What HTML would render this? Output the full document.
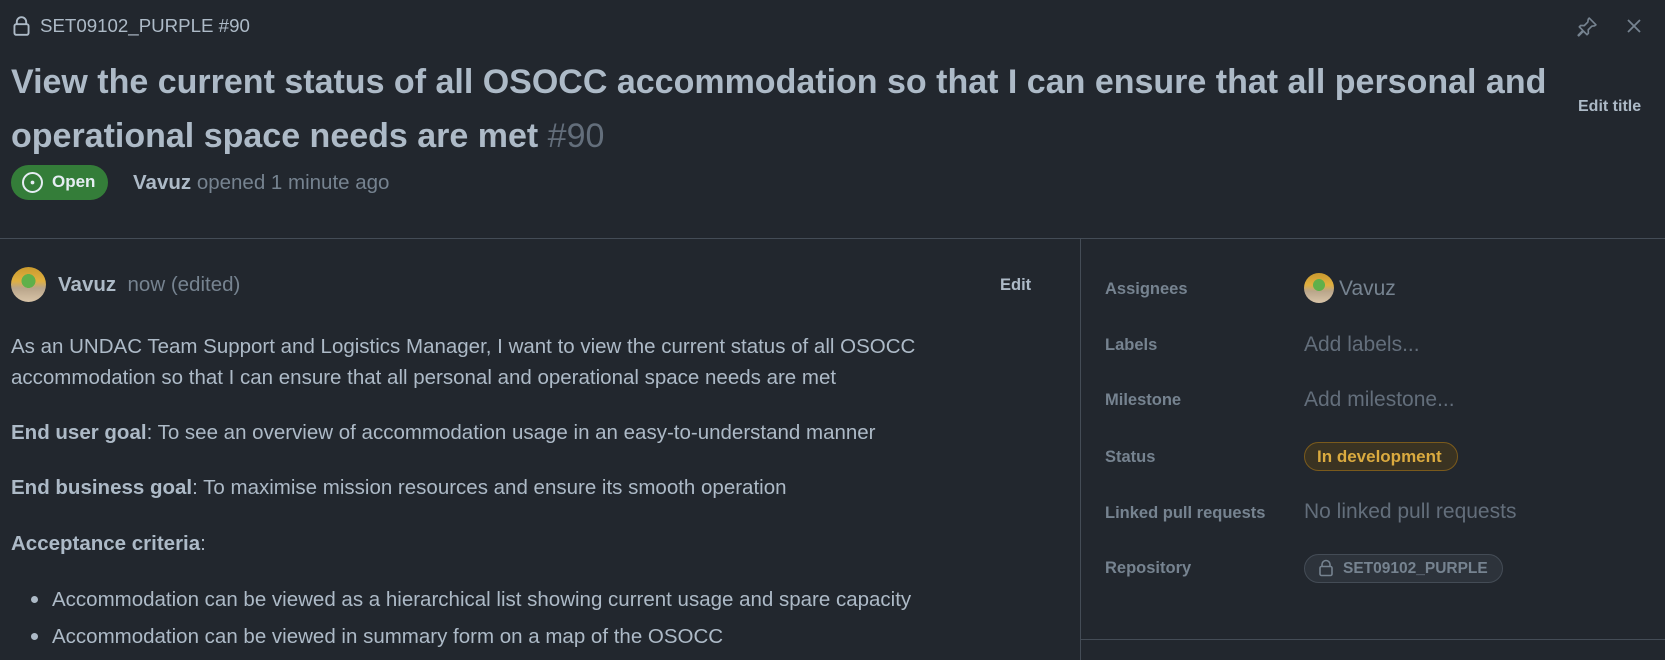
<!DOCTYPE html>
<html><head><meta charset="utf-8"><style>
*{margin:0;padding:0;box-sizing:border-box}
body{width:1665px;height:660px;background:#22272e;color:#adbac7;font-family:"Liberation Sans",sans-serif;position:relative;overflow:hidden}
.a{position:absolute;white-space:nowrap}
.m{color:#768390}
.lbl{font-size:16.5px;font-weight:bold;color:#768390;left:1105px}
.val{font-size:21px;color:#636e7b;left:1304px}
.body{font-size:20.5px;left:11px;color:#adbac7}
b{font-weight:bold}
.av{position:absolute;border-radius:50%;background:radial-gradient(circle at 50% 40%,#5fb04a 0 25%,transparent 26%),linear-gradient(#c99a2e,#e0b040 40%,#b9a58a 60%,#d8c4a8);overflow:hidden}
</style></head><body>
<svg class="a" style="left:12px;top:16px" width="19" height="20" viewBox="0 0 16 17"><path d="M4 7V5a4 4 0 0 1 8 0v2" fill="none" stroke="#adbac7" stroke-width="1.6"/><rect x="2" y="7" width="12" height="9" rx="1.5" fill="none" stroke="#adbac7" stroke-width="1.6"/></svg>
<div class="a" style="left:40px;top:15px;font-size:18.7px">SET09102_PURPLE #90</div>
<svg class="a" style="left:1576px;top:16px" width="22" height="22" viewBox="0 0 16 16"><path d="M9.6 1.5l4.9 4.9-1 .7-2 .3-2.6 2.6.1 2.6-1 1-2.6-2.6L2 14.4 1.6 14l3.4-3.5-2.6-2.6 1-1 2.6.1 2.6-2.6.3-2z" fill="none" stroke="#768390" stroke-width="1.2" stroke-linejoin="round"/></svg>
<svg class="a" style="left:1626px;top:18px" width="16" height="16" viewBox="0 0 16 16"><path d="M2 2l12 12M14 2L2 14" stroke="#768390" stroke-width="1.8"/></svg>
<div class="a" style="left:1578px;top:98px;font-size:16px;font-weight:bold">Edit title</div>
<div class="a" style="left:11px;top:55px;font-size:34px;font-weight:bold;line-height:54px;color:#adbac7">View the current status of all OSOCC accommodation so that I can ensure that all personal and<br>operational space needs are met <span style="font-weight:normal;color:#636e7b">#90</span></div>
<div class="a" style="left:11px;top:165px;width:97px;height:35px;border-radius:18px;background:#347d39;color:#e6edf3;font-size:17px;font-weight:bold;padding:7px 0 0 41px">Open</div>
<svg class="a" style="left:21px;top:171px" width="23" height="23" viewBox="0 0 16 16"><circle cx="8" cy="8" r="6.6" fill="none" stroke="#e6edf3" stroke-width="1.4"/><circle cx="8" cy="8" r="1.3" fill="#e6edf3"/></svg>
<div class="a" style="left:133px;top:171px;font-size:20.5px"><b style="color:#adbac7">Vavuz</b> <span class="m">opened 1 minute ago</span></div>
<div class="a" style="left:0;top:238px;width:1665px;height:1px;background:#444c56"></div>
<div class="a" style="left:1080px;top:238px;width:1px;height:422px;background:#444c56"></div>
<div class="a" style="left:1080px;top:639px;width:585px;height:1px;background:#444c56"></div>
<div class="av" style="left:11px;top:267px;width:35px;height:35px"></div>
<div class="a" style="left:58px;top:273px;font-size:20.5px"><b>Vavuz</b>&nbsp; <span class="m">now (edited)</span></div>
<div class="a" style="left:1000px;top:276px;font-size:16.5px;font-weight:bold">Edit</div>
<div class="a body" style="top:331px;line-height:31px">As an UNDAC Team Support and Logistics Manager, I want to view the current status of all OSOCC<br>accommodation so that I can ensure that all personal and operational space needs are met</div>
<div class="a body" style="top:421px"><b>End user goal</b>: To see an overview of accommodation usage in an easy-to-understand manner</div>
<div class="a body" style="top:476px"><b>End business goal</b>: To maximise mission resources and ensure its smooth operation</div>
<div class="a body" style="top:532px"><b>Acceptance criteria</b>:</div>
<div class="a" style="left:31px;top:596px;width:7px;height:7px;border-radius:50%;background:#adbac7"></div>
<div class="a" style="left:31px;top:633px;width:7px;height:7px;border-radius:50%;background:#adbac7"></div>
<div class="a body" style="left:52px;top:588px">Accommodation can be viewed as a hierarchical list showing current usage and spare capacity</div>
<div class="a body" style="left:52px;top:625px">Accommodation can be viewed in summary form on a map of the OSOCC</div>
<div class="a lbl" style="top:280px">Assignees</div>
<div class="av" style="left:1304px;top:273px;width:30px;height:30px"></div>
<div class="a" style="left:1339px;top:277px;font-size:21px;color:#768390">Vavuz</div>
<div class="a lbl" style="top:336px">Labels</div>
<div class="a val" style="top:333px">Add labels...</div>
<div class="a lbl" style="top:391px">Milestone</div>
<div class="a val" style="top:388px">Add milestone...</div>
<div class="a lbl" style="top:448px">Status</div>
<div class="a" style="left:1304px;top:442px;width:154px;height:29px;border-radius:15px;border:1px solid #7a5a1c;background:#3a3322;color:#daaa3f;font-size:17px;font-weight:bold;padding:4px 0 0 12px">In development</div>
<div class="a lbl" style="top:504px">Linked pull requests</div>
<div class="a val" style="top:500px">No linked pull requests</div>
<div class="a lbl" style="top:559px">Repository</div>
<div class="a" style="left:1304px;top:554px;width:199px;height:29px;border-radius:15px;border:1px solid #444c56;background:#2d333b;color:#768390;font-size:15.5px;font-weight:bold;padding:5px 0 0 38px">SET09102_PURPLE</div>
<svg class="a" style="left:1318px;top:559px" width="16" height="18" viewBox="0 0 16 17"><path d="M4 7V5a4 4 0 0 1 8 0v2" fill="none" stroke="#768390" stroke-width="1.6"/><rect x="2" y="7" width="12" height="9" rx="1.5" fill="none" stroke="#768390" stroke-width="1.6"/></svg>
</body></html>
